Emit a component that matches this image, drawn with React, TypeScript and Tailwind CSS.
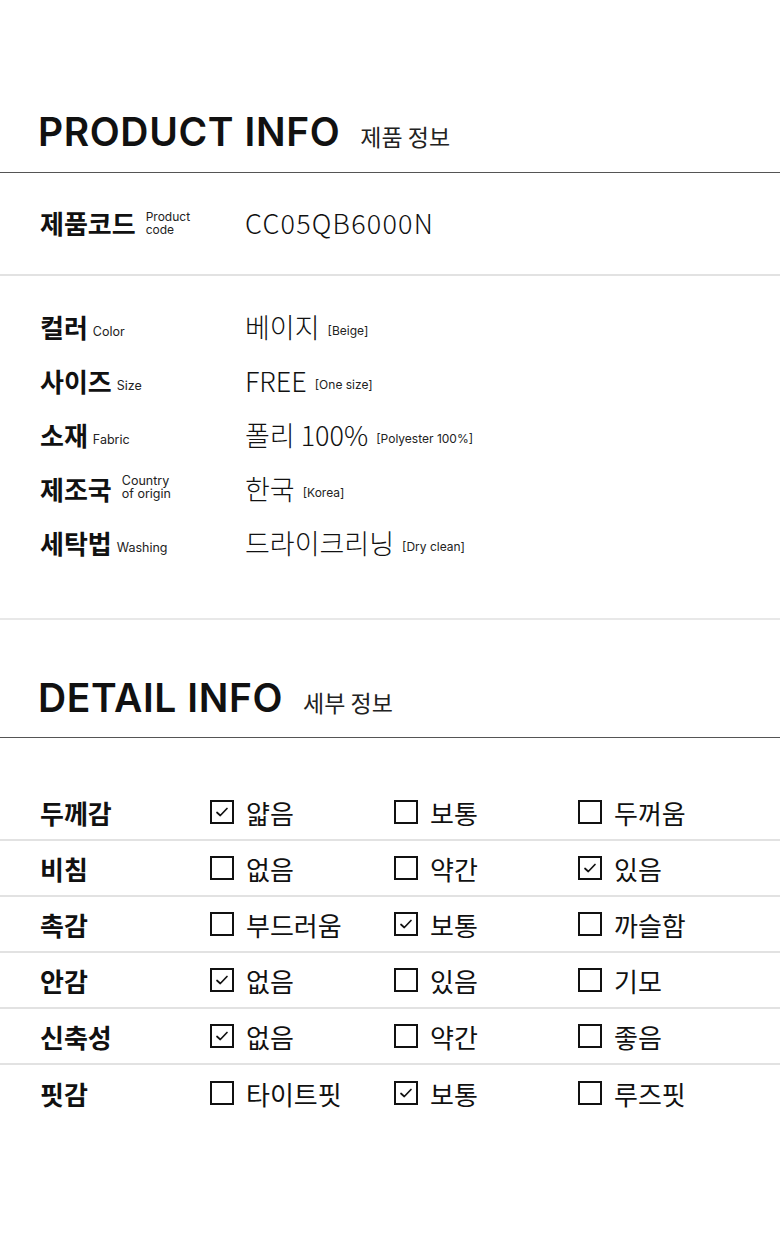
import React from 'react';

const KR = "font-['Noto_Sans_CJK_KR',sans-serif]";
const EN = "font-['Inter','Noto_Sans_CJK_KR',sans-serif]";

const INFO = [
    { ko: '컬러', en: ['Color'], value: '베이지', note: '[Beige]' },
    { ko: '사이즈', en: ['Size'], value: 'FREE', note: '[One size]' },
    { ko: '소재', en: ['Fabric'], value: '폴리 100%', note: '[Polyester 100%]' },
    { ko: '제조국', en: ['Country', 'of origin'], value: '한국', note: '[Korea]' },
    { ko: '세탁법', en: ['Washing'], value: '드라이크리닝', note: '[Dry clean]' },
];

const DETAILS: { label: string; options: string[]; checked: number }[] = [
    { label: '두께감', options: ['얇음', '보통', '두꺼움'], checked: 0 },
    { label: '비침', options: ['없음', '약간', '있음'], checked: 2 },
    { label: '촉감', options: ['부드러움', '보통', '까슬함'], checked: 1 },
    { label: '안감', options: ['없음', '있음', '기모'], checked: 0 },
    { label: '신축성', options: ['없음', '약간', '좋음'], checked: 0 },
    { label: '핏감', options: ['타이트핏', '보통', '루즈핏'], checked: 1 },
];

const CheckBox: React.FC<{ on: boolean }> = ({ on }) => (
    <span className="w-[24px] h-[24px] border-2 border-[#111] flex items-center justify-center shrink-0">
        {on && (
            <svg width="16" height="16" viewBox="0 0 16 16" fill="none">
                <path d="M3 8.5 L6.3 11.5 L13 4.5" stroke="#111" strokeWidth="1.7" strokeLinecap="round" strokeLinejoin="round" />
            </svg>
        )}
    </span>
);

const SectionTitle: React.FC<{ en: string; ko: string }> = ({ en, ko }) => (
    <div className="flex items-baseline gap-[20px] px-[38px] pb-[18px] border-b-[1.5px] border-[#555]">
        <h2 className={`${EN} text-[39px] font-semibold leading-none tracking-[0.6px] text-[#111]`}>{en}</h2>
        <span className={`${KR} text-[23px] font-normal text-[#222]`}>{ko}</span>
    </div>
);

export default function App() {
    return (
        <div className="w-[780px] min-h-[1248px] bg-white text-[#111]">
            <div className="pt-[112px]">
                <SectionTitle en="PRODUCT INFO" ko="제품 정보" />
            </div>

            <div className="h-[103px] flex items-center px-[40px] border-b-2 border-[#e2e2e2]">
                <div className="w-[205px] flex items-center gap-[10px]">
                    <span className={`${KR} text-[26px] font-bold leading-[30px]`}>제품코드</span>
                    <span className={`${EN} text-[12px] leading-[13px] text-[#222]`}>Product<br />code</span>
                </div>
                <span className={`${KR} text-[27px] font-light tracking-[1.2px]`}>CC05QB6000N</span>
            </div>

            <div className="pt-[24px] pb-[48px] px-[40px] border-b-2 border-[#e8e8e8]">
                {INFO.map((row) => (
                    <div key={row.ko} className="h-[54px] flex items-center">
                        <div className="w-[205px] flex items-end gap-[5px]">
                            <span className={`${KR} text-[26px] font-bold leading-[30px]`}>{row.ko}</span>
                            <span className={`${EN} text-[12.5px] leading-[13px] text-[#222] pb-[4px] ${row.en.length > 1 ? 'pl-[5px]' : ''}`}>
                                {row.en.map((l, i) => (
                                    <span key={i} className="block">{l}</span>
                                ))}
                            </span>
                        </div>
                        <div className="flex items-end gap-[8px]">
                            <span className={`${KR} text-[27px] font-light leading-[32px]`}>{row.value}</span>
                            <span className={`${EN} text-[12px] text-[#222] pb-[5px] leading-[14px]`}>{row.note}</span>
                        </div>
                    </div>
                ))}
            </div>

            <div className="pt-[58px]">
                <SectionTitle en="DETAIL INFO" ko="세부 정보" />
            </div>

            <div className="pt-[47px]">
                {DETAILS.map((row, ri) => (
                    <div
                        key={row.label}
                        className={`h-[56px] flex items-center pl-[40px] ${ri < DETAILS.length - 1 ? 'border-b-2 border-[#e2e2e2]' : ''}`}
                    >
                        <span className={`${KR} w-[170px] shrink-0 text-[26px] font-bold`}>{row.label}</span>
                        {row.options.map((opt, i) => (
                            <div key={opt + i} className="w-[184px] shrink-0 flex items-center gap-[12px]">
                                <CheckBox on={row.checked === i} />
                                <span className={`${KR} text-[26px] font-normal`}>{opt}</span>
                            </div>
                        ))}
                    </div>
                ))}
            </div>
        </div>
    );
}
